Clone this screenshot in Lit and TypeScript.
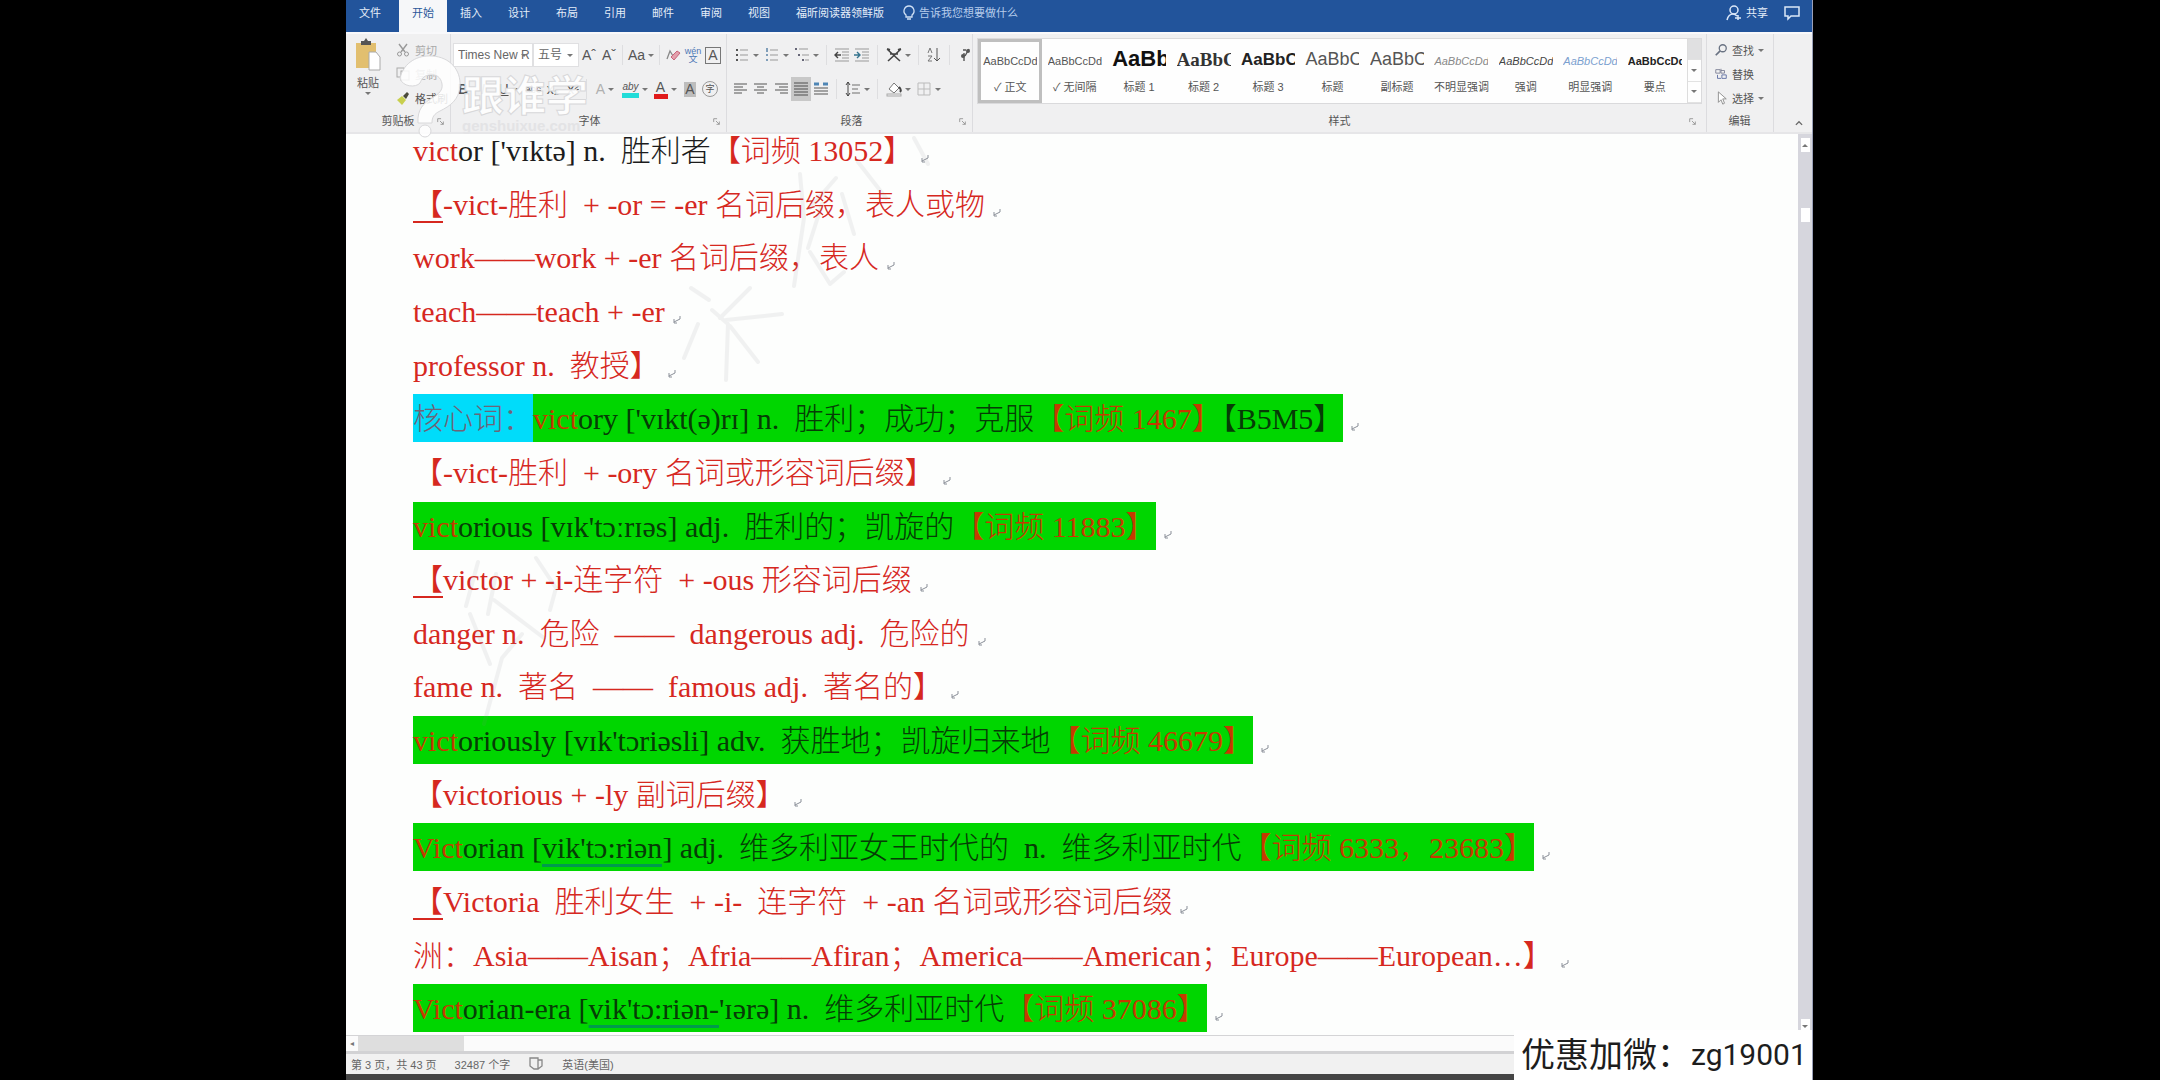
import { LitElement, html, css, svg, nothing } from "lit";
import { customElement, property } from "lit/decorators.js";
import { classMap } from "lit/directives/class-map.js";

type Seg = { t: string; c?: string };
type Line = { segs: Seg[]; hl?: boolean };

const r = (t: string, c = ""): Seg => ({ t, c: "red " + c });
const k = (t: string, c = ""): Seg => ({ t, c });

const LINES: Line[] = [
  { segs: [r("vict"), k("or ['vɪktə] n.  胜利者"), r("【词频 13052】")] },
  { segs: [r("【", "under"), r("-vict-胜利  + -or = -er 名词后缀，表人或物")] },
  { segs: [r("work——work + -er 名词后缀，表人")] },
  { segs: [r("teach——teach + -er")] },
  { segs: [r("professor n.  教授】")] },
  {
    hl: true,
    segs: [
      k("核心词：", "cyan"), r("vict"), k("ory ['vɪkt(ə)rɪ] n.  胜利；成功；克服"),
      r("【词频 1467"), r("】", "half"), k("【B5M5】"),
    ],
  },
  { segs: [r("【-vict-胜利  + -ory 名词或形容词后缀】")] },
  { hl: true, segs: [r("vict"), k("orious [vɪk'tɔːrɪəs] adj.  胜利的；凯旋的"), r("【词频 11883】")] },
  { segs: [r("【", "under"), r("victor + -i-连字符  + -ous 形容词后缀")] },
  { segs: [r("danger n.  危险  ——  dangerous adj.  危险的")] },
  { segs: [r("fame n.  著名  ——  famous adj.  著名的】")] },
  { hl: true, segs: [r("vict"), k("oriously [vɪk'tɔriəsli] adv.  获胜地；凯旋归来地"), r("【词频 46679】")] },
  { segs: [r("【victorious + -ly 副词后缀】")] },
  {
    hl: true,
    segs: [
      r("Vict"), k("orian ["), k("vik'tɔ:riən", "gram"), k("] adj.  维多利亚女王时代的  n.  维多利亚时代"),
      r("【词频 6333，23683】"),
    ],
  },
  { segs: [r("【", "under"), r("Victoria  胜利女生  + -i-  连字符  + -an 名词或形容词后缀")] },
  { segs: [r("洲：Asia——Aisan；Afria——Afiran；America——American；Europe——European…】")] },
  {
    hl: true,
    segs: [
      r("Vict"), k("orian-era ["), k("vik'tɔ:riən-", "gram"), k("'ɪərə] n.  维多利亚时代"), r("【词频 37086】"),
    ],
  },
];

const ICONS: Record<string, unknown> = {
  cut: svg`<path d="M4 2l6 8M12 2L6 10" stroke="#999" stroke-width="1.4"/><circle cx="4.5" cy="12" r="2" stroke="#999"/><circle cx="11.5" cy="12" r="2" stroke="#999"/>`,
  copy: svg`<rect x="2" y="2" width="7" height="9" stroke="#aaa"/><rect x="6" y="5" width="8" height="9" fill="#eee" stroke="#aaa"/>`,
  brush: svg`<path d="M2 10l5-4 4 4-4 5z" fill="#c8cf4e"/><path d="M8 6l4-4 2 2-3 5z" fill="#4a4a3a"/>`,
  eraser: svg`<path d="M2 12L5 4l3 5" stroke="#888" stroke-width="1.3"/><path d="M6 10l6-6 3 2-6 7z" fill="#e3a0ac" stroke="#c8637a"/>`,
  bullets: svg`<path d="M2 3h2M2 8h2M2 13h2" stroke="#555" stroke-width="2"/><path d="M6 3h8M6 8h8M6 13h8" stroke="#999"/>`,
  numbers: svg`<path d="M3 1v4M2 8h2M2 13h2" stroke="#5b83a6" stroke-width="1.5"/><path d="M6 3h8M6 8h8M6 13h8" stroke="#999"/>`,
  levels: svg`<path d="M1 2h2M4 8h2M8 13h2" stroke="#667" stroke-width="2"/><path d="M5 2h9M8 8h7M11 13h4" stroke="#999"/>`,
  outdent: svg`<path d="M1 2h14M8 5h7M8 8h7M8 11h7M1 14h14" stroke="#999"/><path d="M7 8H1m3-3L1 8l3 3" stroke="#444" stroke-width="1.4"/>`,
  indent: svg`<path d="M1 2h14M8 5h7M8 8h7M8 11h7M1 14h14" stroke="#999"/><path d="M0 8h6M3 5l3 3-3 3" stroke="#35748f" stroke-width="1.4"/>`,
  asian: svg`<path d="M2 3l12 11M14 3L2 14M4 7h8" stroke="#444" stroke-width="1.6"/><path d="M1 2l3 1M15 2l-3 1" stroke="#444" stroke-width="2"/>`,
  sort: svg`<path d="M2 6l2-5 2 5M2 9h4l-4 5h4" stroke="#777"/><path d="M11 1v13M8 11l3 3 3-3" stroke="#555"/>`,
  marks: svg`<path d="M7 14V6M12 2L8 9M6 3h3" stroke="#555" stroke-width="1.4"/><circle cx="6" cy="9" r="2" fill="#555"/><circle cx="11" cy="4" r="2" fill="#555"/>`,
  left: svg`<path d="M1 3h13M1 6h9M1 9h13M1 12h8" stroke="#888" stroke-width="1.4"/>`,
  center: svg`<path d="M1 3h13M4 6h7M1 9h13M4 12h7" stroke="#888" stroke-width="1.4"/>`,
  right: svg`<path d="M2 3h13M6 6h9M2 9h13M7 12h8" stroke="#888" stroke-width="1.4"/>`,
  justify: svg`<path d="M1 2h14M1 5h14M1 8h14M1 11h14M1 14h14" stroke="#8a8a8a" stroke-width="2"/>`,
  spread: svg`<path d="M1 3h5M10 3h5" stroke="#4f86b5" stroke-width="3"/><path d="M1 7h14M1 10h14M1 13h14" stroke="#888" stroke-width="1.6"/>`,
  spacing: svg`<path d="M3 1v14M1 4l2-3 2 3M1 12l2 3 2-3" stroke="#444"/><path d="M7 4h8M7 8h6M7 12h8" stroke="#999" stroke-width="1.4"/>`,
  bucket: svg`<path d="M3 8l5-6 5 5-5 5z" fill="#fff" stroke="#777"/><path d="M13 6c2 2 2 4 1 5" stroke="#444" stroke-width="2"/><rect x="1" y="13" width="14" height="2" stroke="#aaa"/>`,
  grid: svg`<path d="M2 2h12v12H2zM8 2v12M2 8h12" stroke="#bbb"/>`,
  find: svg`<circle cx="10" cy="6" r="4" stroke="#6a7383" stroke-width="1.5"/><path d="M7 9l-5 5" stroke="#6a7383" stroke-width="2"/>`,
  replace: svg`<path d="M2 3h5v4H2zM8 2v5h4V4H8" stroke="#7b7f95"/><path d="M4 9v4h4M9 9h5v4H9z" stroke="#5a6aa0"/>`,
  pick: svg`<path d="M5 1v12l3-3 2 5 2-1-2-5h4z" fill="#fff" stroke="#888"/>`,
  bulb: svg`<path d="M8 1a5 5 0 0 1 3 9v2H5v-2a5 5 0 0 1 3-9zM6 14h4" stroke="#cfe0f5" stroke-width="1.3"/>`,
  person: svg`<circle cx="8" cy="5" r="4" stroke="#dbe7f8" stroke-width="1.5"/><path d="M1 15c1-4 3-6 6-6 2 0 3 1 4 2M12 10v5M9 13h6" stroke="#dbe7f8" stroke-width="1.5"/>`,
  comment: svg`<path d="M1 2h14v9H7l-3 3v-3H1z" stroke="#dbe7f8" stroke-width="1.5"/>`,
  launch: svg`<path d="M3 9V3h6M7 7l6 6M13 8v5H8" stroke="#888" stroke-width="1.4"/>`,
  chevron: svg`<path d="M3 11l5-5 5 5" stroke="#666" stroke-width="2"/>`,
  proof: svg`<path d="M2 2h8v11H6l-4-3zM10 4h4v6l-4 3" stroke="#888" stroke-width="1.3"/>`,
};

@customElement("ui-icon")
class UiIcon extends LitElement {
  @property() name = "";
  static styles = css`
    :host { display: inline-flex; width: 16px; height: 16px; flex: none; }
    .glyph { width: 100%; height: 100%; fill: none; }
  `;
  render() {
    return html`<svg class="glyph" viewBox="0 0 16 16" aria-hidden="true">${ICONS[this.name] ?? nothing}</svg>`;
  }
}

const TABS = ["文件", "开始", "插入", "设计", "布局", "引用", "邮件", "审阅", "视图", "福昕阅读器领鲜版"];

const STYLES: [string, string, string][] = [
  ["AaBbCcDd", "✓ 正文", "body"],
  ["AaBbCcDd", "✓ 无间隔", "body"],
  ["AaBb", "标题 1", "h1"],
  ["AaBbC", "标题 2", "h2"],
  ["AaBbC", "标题 3", "h3"],
  ["AaBbC", "标题", "h4"],
  ["AaBbC", "副标题", "h4"],
  ["AaBbCcDd", "不明显强调", "soft"],
  ["AaBbCcDd", "强调", "em"],
  ["AaBbCcDd", "明显强调", "blue"],
  ["AaBbCcDd", "要点", "strong"],
];

@customElement("app-root")
class AppRoot extends LitElement {
  static styles = css`
    :host { display: block; background: #000; font-family: "Liberation Sans", "Noto Sans CJK SC", sans-serif; }
    * { box-sizing: border-box; }
    button, select { font: inherit; color: inherit; border: 0; background: none; padding: 0; margin: 0; }
    .stage { display: grid; grid-template-columns: 346fr 1467fr 347fr; min-height: 100vh; }
    .window { grid-column: 2; display: flex; flex-direction: column; min-width: 0; background: #fff; position: relative; border-right: 1px solid #9aa0b8; }

    .tabs { display: flex; height: 32px; background: #22549b; color: #e4edf9; font-size: 11px; line-height: 26px; padding-bottom: 6px; }
    .tab { padding: 0 13px; white-space: nowrap; }
    .tab:first-child { padding-right: 18px; }
    .tab.on { background: #f6f7f9; color: #2b579a; height: 32px; padding-bottom: 6px; }
    .tell { display: flex; align-items: center; gap: 2px; margin-left: 4px; color: #b6cceb; }
    .account { margin-left: auto; display: flex; align-items: center; gap: 16px; padding-right: 12px; }
    .share { display: flex; align-items: center; gap: 4px; }

    .ribbon { display: flex; height: 102px; background: #f0f0f1; border-top: 2px solid #f9f9fb; border-bottom: 2px solid #e6e6e8; font-size: 11px; color: #555; }
    .group { display: flex; flex-direction: column; border-right: 1px solid #dcdcdf; padding-top: 4px; flex: none; }
    .rows { flex: 1; display: flex; flex-direction: column; }
    .caption { height: 22px; line-height: 22px; display: grid; grid-template-columns: 20px 1fr 20px; text-align: center; align-items: center; }
    .caption.plain { grid-template-columns: 1fr; padding-right: 8px; }
    .caption ui-icon { width: 9px; height: 9px; justify-self: center; }
    .bar { display: flex; align-items: center; height: 34px; }
    .tool { width: 20px; height: 24px; display: flex; align-items: center; justify-content: center; flex: none; font-size: 14px; white-space: nowrap; }
    .tool.wide { width: 30px; gap: 3px; }
    .tool.on { background: #c8c8c8; }
    .arrow { border: 3px solid transparent; border-top-color: #777; border-bottom-width: 0; width: 6px; height: 3px; flex: none; }
    .sep { width: 1px; height: 20px; background: #dedee0; margin: 0 3px; flex: none; }
    .dim { color: #b0b0b0; }
    .b { font-weight: 700; }
    .i { font-style: italic; }
    .u { text-decoration: underline; }
    .s { text-decoration: line-through; font-size: 10px; }
    .mark-c { border-bottom: 5px solid #22dcd8; font-size: 10px; line-height: 12px; font-style: italic; }
    .mark-r { border-bottom: 5px solid #e01b1b; line-height: 14px; width: 14px; }
    .mark-g { background: #bdbdbd; line-height: 15px; width: 12px; }
    .boxed { border: 1px solid #777; line-height: 15px; width: 16px; }
    .ring { border: 1px solid #999; border-radius: 50%; font-size: 9px; line-height: 14px; width: 16px; }
    .pin { font-size: 9px; line-height: 8px; color: #4d77b5; }

    .clip { width: 105px; }
    .clip .rows { flex-direction: row; padding-left: 9px; gap: 14px; }
    .paste { display: flex; flex-direction: column; align-items: center; width: 26px; gap: 2px; }
    .paste svg { width: 26px; height: 34px; flex: none; }
    .stack { display: flex; flex-direction: column; }
    .line { display: flex; align-items: center; gap: 4px; height: 24px; white-space: nowrap; }
    .faded { color: #a9a9a9; }
    .font { width: 276px; padding-left: 2px; }
    .combo { appearance: none; height: 24px; background: #fff; border: 1px solid #e0e0e2; font-size: 12px; padding-left: 4px; width: 80px; color: #666; border-radius: 0; }
    .combo.small { width: 46px; }
    .pick { display: flex; align-items: center; }
    .pick .arrow { margin-left: -12px; margin-right: 6px; }
    .para { width: 246px; padding-left: 4px; }
    .para .sep { margin: 0 5px; }
    .styles { flex: 1; min-width: 0; padding: 4px 4px 0; }
    .gallery { display: flex; height: 66px; background: #fefefe; border: 1px solid #dadadc; }
    .card { flex: 1 1 0; min-width: 0; display: flex; flex-direction: column; align-items: center; overflow: hidden; }
    .card.on { box-shadow: inset 0 0 0 3px #bfbfbf; }
    .sample { height: 40px; line-height: 44px; width: 54px; overflow: hidden; white-space: nowrap; font-size: 12px; color: #555; text-align: left; }
    .name { line-height: 16px; white-space: nowrap; }
    .sample.body, .sample.soft, .sample.em, .sample.blue, .sample.strong { font-size: 11px; }
    .sample.h1 { font: 700 22px/40px "Liberation Sans", sans-serif; color: #111; }
    .sample.h2 { font: 700 19px/42px "Liberation Serif", serif; color: #333; }
    .sample.h3 { font: 700 17px/42px "Liberation Sans", sans-serif; color: #222; }
    .sample.h4 { font-size: 18px; line-height: 40px; }
    .sample.soft { font-style: italic; color: #888; }
    .sample.em { font-style: italic; color: #444; }
    .sample.blue { font-style: italic; color: #7ba0cf; }
    .sample.strong { font-weight: 700; color: #222; }
    .more { width: 14px; display: flex; flex-direction: column; border-left: 1px solid #ddd; flex: none; }
    .more button { flex: 1; display: flex; align-items: center; justify-content: center; border-bottom: 1px solid #e2e2e2; }
    .more button.off { background: #e0e0e1; }
    .edit { width: 67px; padding-left: 7px; }
    .edit .line ui-icon { width: 14px; height: 14px; }
    .fold { width: 38px; display: flex; align-items: flex-end; justify-content: center; padding: 0 0 4px 12px; }
    .fold ui-icon { width: 10px; height: 10px; }

    .main { flex: 1; display: flex; min-height: 0; }
    .paper { flex: 1; min-width: 0; overflow: hidden; background: #fdfefd; position: relative; }
    .doc { display: grid; grid-auto-rows: 1fr; margin: -8px 0 -3px; padding-left: 67px; height: calc(100% + 11px); min-height: 816px; font-family: "Liberation Serif", "Noto Sans CJK SC", serif; font-weight: 300; font-size: 30px; color: #1c1c1c; }
    .row { display: flex; align-items: flex-start; margin: 0; white-space: pre; }
    .seg { display: block; height: 48px; padding-top: 5px; line-height: 40px; }
    .red { color: #d6281f; }
    .hl .seg { background: #00d600; color: #063c06; }
    .hl .red { color: #c53a00; }
    .hl .cyan { background: #00dcfa; color: #6e6478; }
    .under { text-decoration: underline; text-decoration-thickness: 2px; text-underline-offset: 6px; }
    .gram { text-decoration: underline; text-decoration-color: #009a4c; text-decoration-thickness: 3px; text-underline-offset: 6px; }
    .half { font-feature-settings: "halt"; }
    .ret { width: 8px; height: 8px; margin: 29px 0 0 8px; flex: none; fill: none; stroke: #8a8f98; }

    .vscroll { width: 14px; background: #d6d6dd; display: flex; flex-direction: column; align-items: center; padding: 4px 0 2px; gap: 56px; flex: none; }
    .vscroll button { width: 9px; height: 14px; background: #fff; display: flex; align-items: center; justify-content: center; }
    .vscroll .end { margin-top: auto; }
    .flip { transform: rotate(180deg); }
    .hscroll { display: flex; height: 19px; background: #fbfbfb; border-top: 1px solid #d4d4d6; border-bottom: 3px solid #d2d2d4; }
    .hscroll .thumb { width: 106px; background: #dedede; }
    .hscroll .nub { width: 12px; font-size: 8px; color: #777; }
    .status { display: flex; align-items: center; gap: 18px; height: 20px; background: #f1f1f1; font-size: 11px; color: #666; padding-left: 5px; }
    .edge { height: 6px; background: #454545; }

    .logo { position: absolute; left: 52px; top: 54px; display: flex; align-items: flex-end; pointer-events: none; }
    .logo svg { width: 64px; height: 84px; fill: rgba(255, 255, 255, 0.85); stroke: #d8d8da; }
    .brand { display: flex; flex-direction: column; color: rgba(255, 255, 255, 0.92); font: 700 42px/50px "Noto Sans CJK SC", sans-serif; -webkit-text-stroke: 1px #d8d8da; padding-bottom: 4px; }
    .site { font: 700 15px/16px "Liberation Sans", sans-serif; color: #e3e3e5; -webkit-text-stroke: 0; }
    .ghost { position: absolute; left: 0; top: 0; width: 700px; height: 600px; fill: none; stroke: #8a8a90; stroke-width: 4; opacity: 0.1; pointer-events: none; stroke-linecap: round; stroke-linejoin: round; }
    .contact { position: absolute; right: 0; bottom: 0; height: 50px; width: 298px; padding-left: 7px; background: #fff; color: #1d1d1d; font: 34px/46px "Noto Sans CJK SC", sans-serif; display: flex; white-space: nowrap; }
    .contact .id { font: 30px/50px Roboto, sans-serif; }
  `;

  private tool(content: unknown, label: string, wide = false, on = false) {
    return html`<button class=${classMap({ tool: true, wide, on })} aria-label=${label}>${content}${wide ? html`<i class="arrow"></i>` : nothing}</button>`;
  }

  private icon(name: string, label: string, wide = false, on = false) {
    return this.tool(html`<ui-icon name=${name}></ui-icon>`, label, wide, on);
  }

  private caption(text: string) {
    return html`<div class="caption"><span></span><span>${text}</span><ui-icon name="launch"></ui-icon></div>`;
  }

  private ribbon() {
    const sep = html`<span class="sep"></span>`;
    return html`<div class="ribbon">
      <section class="group clip">
        <div class="rows">
          <button class="paste">
            <svg viewBox="0 0 26 34" fill="none"><path d="M1 5h20v25H1z" fill="#e2bf6f"/><path d="M6 3h3l2-3 2 3h3v4H6z" fill="#555"/><path d="M14 14h7l4 5v13H14z" fill="#fff" stroke="#aaa"/></svg>
            <span>粘贴</span><i class="arrow"></i>
          </button>
          <div class="stack">
            <button class="line faded"><ui-icon name="cut"></ui-icon>剪切</button>
            <button class="line faded"><ui-icon name="copy"></ui-icon>复制</button>
            <button class="line"><ui-icon name="brush"></ui-icon>格式刷</button>
          </div>
        </div>
        ${this.caption("剪贴板")}
      </section>
      <section class="group font">
        <div class="rows">
          <div class="bar">
            <span class="pick"><select class="combo" aria-label="字体"><option>Times New R</option></select><i class="arrow"></i></span>
            <span class="pick"><select class="combo small" aria-label="字号"><option>五号</option></select><i class="arrow"></i></span>
            ${this.tool("Aˆ", "增大字号")}${this.tool("Aˇ", "减小字号")}${sep}
            ${this.tool("Aa", "更改大小写", true)}${sep}
            ${this.icon("eraser", "清除格式")}${this.tool(html`<span class="pin">wén<br />文</span>`, "拼音指南")}${this.tool(html`<span class="boxed">A</span>`, "字符边框")}
          </div>
          <div class="bar">
            ${this.tool(html`<span class="b">B</span>`, "加粗")}${this.tool(html`<span class="i">I</span>`, "倾斜")}
            ${this.tool(html`<span class="u">U</span>`, "下划线", true)}${this.tool(html`<span class="s">abc</span>`, "删除线")}
            ${this.tool("x₂", "下标")}${this.tool("x²", "上标")}${sep}
            ${this.tool(html`<span class="dim">A</span>`, "文本效果", true)}
            ${this.tool(html`<span class="mark-c">aby</span>`, "突出显示", true)}
            ${this.tool(html`<span class="mark-r">A</span>`, "字体颜色", true)}
            ${this.tool(html`<span class="mark-g">A</span>`, "字符底纹")}${this.tool(html`<span class="ring">字</span>`, "带圈字符")}
          </div>
        </div>
        ${this.caption("字体")}
      </section>
      <section class="group para">
        <div class="rows">
          <div class="bar">
            ${this.icon("bullets", "项目符号", true)}${this.icon("numbers", "编号", true)}${this.icon("levels", "多级列表", true)}${sep}
            ${this.icon("outdent", "减少缩进")}${this.icon("indent", "增加缩进")}${sep}${this.icon("asian", "中文版式", true)}${sep}
            ${this.icon("sort", "排序")}${sep}${this.icon("marks", "编辑标记")}
          </div>
          <div class="bar">
            ${this.icon("left", "左对齐")}${this.icon("center", "居中")}${this.icon("right", "右对齐")}${this.icon("justify", "两端对齐", false, true)}${this.icon("spread", "分散对齐")}${sep}
            ${this.icon("spacing", "行距", true)}${sep}${this.icon("bucket", "底纹", true)}${this.icon("grid", "边框", true)}
          </div>
        </div>
        ${this.caption("段落")}
      </section>
      <section class="group styles">
        <div class="rows">
          <div class="gallery">
            ${STYLES.map(([s, n, c], i) => html`<button class=${classMap({ card: true, on: i === 0 })}><span class="sample ${c}">${s}</span><span class="name">${n}</span></button>`)}
            <div class="more">
              <button class="off" aria-label="上一行"></button>
              <button aria-label="下一行"><i class="arrow"></i></button>
              <button aria-label="其他"><i class="arrow"></i></button>
            </div>
          </div>
        </div>
        ${this.caption("样式")}
      </section>
      <section class="group edit">
        <div class="rows stack">
          <button class="line"><ui-icon name="find"></ui-icon>查找<i class="arrow"></i></button>
          <button class="line"><ui-icon name="replace"></ui-icon>替换</button>
          <button class="line"><ui-icon name="pick"></ui-icon>选择<i class="arrow"></i></button>
        </div>
        <div class="caption plain"><span>编辑</span></div>
      </section>
      <button class="fold" aria-label="折叠功能区"><ui-icon name="chevron"></ui-icon></button>
    </div>`;
  }

  private line(l: Line) {
    return html`<p class=${classMap({ row: true, hl: !!l.hl })}>${l.segs.map((s) => html`<span class="seg ${s.c ?? ""}">${s.t}</span>`)}<svg class="ret" viewBox="0 0 8 8" aria-hidden="true"><path d="M7 0v3L1 6M1 3v4h3"/></svg></p>`;
  }

  render() {
    return html`<div class="stage">
      <div class="window">
        <nav class="tabs">
          ${TABS.map((t, i) => html`<button class=${classMap({ tab: true, on: i === 1 })}>${t}</button>`)}
          <button class="tell"><ui-icon name="bulb"></ui-icon>告诉我您想要做什么</button>
          <div class="account">
            <button class="share"><ui-icon name="person"></ui-icon>共享</button>
            <ui-icon name="comment"></ui-icon>
          </div>
        </nav>
        ${this.ribbon()}
        <div class="main">
          <article class="paper">
            <div class="doc">${LINES.map((l) => this.line(l))}</div>
            <svg class="ghost" viewBox="0 0 700 600" aria-hidden="true">
              <path d="M345 154l18 12M404 154l-30 30M366 176l16 14-2 56M380 186l56-6M384 192l28 36M352 190l-14 34"/>
              <path d="M454 40l4 44-10 68M476 70l-14 44M464 118l20 32 14-12M496 60l12 40M512 28l28 36M490 44l-26 30M568 4l14 26"/>
              <path d="M132 428l-12 44M124 480l20 50M148 466l50 38M190 424l20 30-6 22M176 500l-20 24-18 66M150 440l-8 40"/>
            </svg>
          </article>
          <div class="vscroll">
            <button aria-label="向上滚动"><i class="arrow flip"></i></button>
            <button aria-label="滚动块"></button>
            <button class="end" aria-label="向下滚动"><i class="arrow"></i></button>
          </div>
        </div>
        <div class="hscroll"><button class="nub" aria-label="向左滚动">◂</button><span class="thumb"></span></div>
        <footer class="status"><span>第 3 页，共 43 页</span><span>32487 个字</span><ui-icon name="proof"></ui-icon><span>英语(美国)</span></footer>
        <div class="edge"></div>
        <div class="logo">
          <svg viewBox="0 0 64 84" aria-hidden="true"><path d="M2 24C6 8 20 1 34 2c18 1 29 14 28 30-1 14-10 20-20 25-6 3-8 6-8 12H20c-1-14 6-20 14-25 7-4 11-8 10-14-1-7-6-10-12-9-5 0-8 3-10 8-4 5-18 4-20-5z"/><circle cx="27" cy="77" r="6"/></svg>
          <div class="brand">跟谁学<span class="site">genshuixue.com</span></div>
        </div>
        <div class="contact"><span>优惠加微：</span><span class="id">zg19001</span></div>
      </div>
    </div>`;
  }
}
